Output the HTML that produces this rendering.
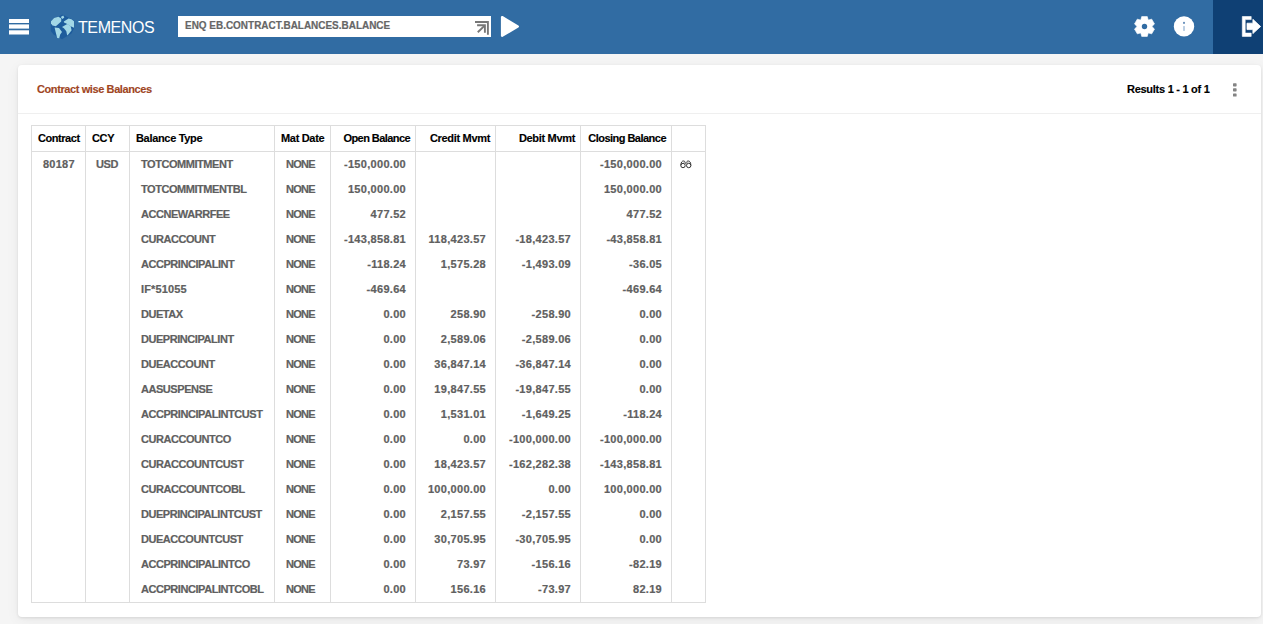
<!DOCTYPE html><html><head><meta charset="utf-8"><style>
*{margin:0;padding:0;box-sizing:border-box}
html,body{width:1263px;height:624px;overflow:hidden;background:#f5f5f5;font-family:"Liberation Sans",sans-serif}
.hdr{position:absolute;left:0;top:0;width:1263px;height:54px;background:#316ca3}
.card{position:absolute;left:18px;top:65px;width:1243px;height:552px;background:#fff;border-radius:4px;box-shadow:0 1px 3px rgba(0,0,0,.1),0 3px 14px rgba(0,0,0,.055)}
.t{position:absolute;white-space:nowrap;font-weight:bold;font-size:11px;line-height:13px}
.ttl{color:#a0461f;letter-spacing:-0.4px;-webkit-text-stroke:0.15px #a0461f}
.res{color:#000;letter-spacing:-0.27px;-webkit-text-stroke:0.15px #000}
.vl{position:absolute;width:1px;background:#ddd;top:125px;height:478px}
.hl{position:absolute;height:1px;background:#ddd;left:31px;width:675px}
.h{color:#000;letter-spacing:-0.32px;-webkit-text-stroke:0.15px #000}
.d{color:#606060;letter-spacing:-0.45px;-webkit-text-stroke:0.2px #606060}
.n{color:#606060;letter-spacing:0.3px;text-align:right;-webkit-text-stroke:0.2px #606060}
.srch{position:absolute;left:178px;top:16px;width:313px;height:21px;background:#fff}
</style></head><body>
<div class="hdr">
<svg style="position:absolute;left:0;top:0" width="1263" height="54"><rect x="1213" y="0" width="50" height="54" fill="#0f4074"/><rect x="9" y="19" width="20" height="4" fill="#fff"/><rect x="9" y="24.4" width="20" height="4.2" fill="#fff"/><rect x="9" y="30.3" width="20" height="4.2" fill="#fff"/><path d="M62.4,14.6 L74.2,20.6 L74,28.5 L71.5,33.5 L62,39.2 L53.5,34.5 L50.8,31 L50.8,20.8 Z" fill="#1d5c9c"/><path d="M51,21.2 L54.2,18 L58.5,16.8 L61.3,18.5 L61.2,21.5 L58.4,24 L55.8,26.2 L52.5,25.4 L51,23.6 Z" fill="#a2d7e6"/><path d="M60.8,16.9 L63.2,15.6 L64.3,17.4 L62.4,19 Z" fill="#a2d7e6"/><path d="M54.6,27.6 L59,27.9 L62,32 L60.2,34.6 L59.2,38.2 L57.2,38 L55.7,32.3 Z" fill="#a2d7e6"/><path d="M63.8,21.6 L68.6,18.6 L71.5,19.2 L74,21.2 L74,27.8 L70.6,26.3 L66.3,23.5 L64,22.6 Z" fill="#a2d7e6"/><path d="M62,26.9 L67.2,24 L70.6,26 L71.6,30.3 L68.7,34.1 L67.2,35.6 L66.3,31.2 L63.9,28.3 Z" fill="#a2d7e6"/><path d="M502.1,17.1 L517.8,26.5 L502.1,35.7 Z" fill="#fff" stroke="#fff" stroke-width="2.4" stroke-linejoin="round"/><g transform="translate(1144.5,26.5)" fill="#fff" stroke="#fff" stroke-width="0.6" stroke-linejoin="round"><circle r="7.1"/><path d="M-3.8,-6 L-2.8,-9.9 L2.8,-9.9 L3.8,-6 Z" transform="rotate(0)"/><path d="M-3.8,-6 L-2.8,-9.9 L2.8,-9.9 L3.8,-6 Z" transform="rotate(60)"/><path d="M-3.8,-6 L-2.8,-9.9 L2.8,-9.9 L3.8,-6 Z" transform="rotate(120)"/><path d="M-3.8,-6 L-2.8,-9.9 L2.8,-9.9 L3.8,-6 Z" transform="rotate(180)"/><path d="M-3.8,-6 L-2.8,-9.9 L2.8,-9.9 L3.8,-6 Z" transform="rotate(240)"/><path d="M-3.8,-6 L-2.8,-9.9 L2.8,-9.9 L3.8,-6 Z" transform="rotate(300)"/></g><circle cx="1144.5" cy="26.5" r="2.7" fill="#316ca3"/><circle cx="1184" cy="26.4" r="10.2" fill="#fff"/><rect x="1183" y="21.9" width="2" height="1.9" fill="#6f95be"/><rect x="1183" y="26.1" width="2" height="4.8" fill="#bccfe3"/><path d="M1242.3,16.5 H1251.2 V19.6 H1245.2 V33.1 H1251.2 V36.4 H1242.3 Z" fill="#fff" stroke="#fff" stroke-width="0.6" stroke-linejoin="round"/><path d="M1247,23.2 H1252.9 V19.3 L1260.6,26.5 L1252.9,33.6 V29.6 H1247 Z" fill="#fff" stroke="#fff" stroke-width="0.8" stroke-linejoin="round"/></svg>
<div style="position:absolute;left:78px;top:18px;font-size:16px;color:#fff;line-height:20px;letter-spacing:-0.4px">TEMENOS</div>
<div class="srch"><div class="t" style="left:7px;top:3px;color:#666;letter-spacing:0;transform:scaleX(0.905);transform-origin:0 0;-webkit-text-stroke:0.2px #666">ENQ EB.CONTRACT.BALANCES.BALANCE</div><svg style="position:absolute;left:0;top:0" width="313" height="21" viewBox="178 16 313 21"><path d="M475,22 H487.9 V34.8" fill="none" stroke="#777" stroke-width="1.9"/><path d="M477.1,25.3 H484.9 V32.7" fill="none" stroke="#777" stroke-width="1.9"/><path d="M477.8,32.3 L484.6,25.6" fill="none" stroke="#777" stroke-width="1.9"/></svg></div>
</div>
<div class="card"></div>
<div class="t ttl" style="left:37px;top:83px">Contract wise Balances</div>
<div class="t res" style="left:1127px;top:83px">Results 1 - 1 of 1</div>
<svg style="position:absolute;left:1230px;top:80px" width="10" height="20"><rect x="3" y="3.2" width="3.6" height="3.2" rx="0.7" fill="#848484"/><rect x="3" y="8.3" width="3.6" height="3.2" rx="0.7" fill="#848484"/><rect x="3" y="13.4" width="3.6" height="3.2" rx="0.7" fill="#848484"/></svg>
<div style="position:absolute;left:18px;top:113px;width:1243px;height:1px;background:#efefef"></div>
<div class="vl" style="left:31px"></div>
<div class="vl" style="left:85px"></div>
<div class="vl" style="left:129px"></div>
<div class="vl" style="left:274px"></div>
<div class="vl" style="left:330px"></div>
<div class="vl" style="left:415px"></div>
<div class="vl" style="left:495px"></div>
<div class="vl" style="left:580px"></div>
<div class="vl" style="left:671px"></div>
<div class="vl" style="left:705px"></div>
<div class="hl" style="top:125px"></div>
<div class="hl" style="top:151px"></div>
<div class="hl" style="top:602px"></div>
<svg style="position:absolute;left:676px;top:156px" width="20" height="16" viewBox="676 156 20 16"><g fill="none" stroke="#2a2a2a" stroke-width="0.95"><circle cx="683" cy="165.5" r="2.2"/><circle cx="688.7" cy="165.5" r="2.2"/><path d="M680.9,165.3 C680.9,162.3 682,161 683.4,161 C684.6,161 685.3,161.8 685.6,163.6"/><path d="M690.8,165.3 C690.8,162.3 689.7,161 688.3,161 C687.1,161 686.4,161.8 686.1,163.6"/></g><path d="M683.5,162.7 H688.2" stroke="#999" stroke-width="0.8"/></svg>
<div class="t h" style="left:38px;top:132px;letter-spacing:-0.45px">Contract</div>
<div class="t h" style="left:92px;top:132px;letter-spacing:-0.32px">CCY</div>
<div class="t h" style="left:136px;top:132px;letter-spacing:-0.32px">Balance Type</div>
<div class="t h" style="left:281px;top:132px;letter-spacing:-0.32px">Mat Date</div>
<div class="t h" style="right:853px;top:132px;letter-spacing:-0.57px">Open Balance</div>
<div class="t h" style="right:773px;top:132px;letter-spacing:-0.32px">Credit Mvmt</div>
<div class="t h" style="right:688px;top:132px;letter-spacing:-0.32px">Debit Mvmt</div>
<div class="t h" style="right:597px;top:132px;letter-spacing:-0.52px">Closing Balance</div>
<div class="t d" style="left:43px;top:158px;letter-spacing:0.25px">80187</div>
<div class="t d" style="left:85px;width:44px;text-align:center;top:158px">USD</div>
<div class="t d" style="left:141px;top:158px">TOTCOMMITMENT</div>
<div class="t d" style="left:286px;top:158px;letter-spacing:-0.75px">NONE</div>
<div class="t n" style="right:857px;top:158px">-150,000.00</div>
<div class="t n" style="right:601px;top:158px">-150,000.00</div>
<div class="t d" style="left:141px;top:183px">TOTCOMMITMENTBL</div>
<div class="t d" style="left:286px;top:183px;letter-spacing:-0.75px">NONE</div>
<div class="t n" style="right:857px;top:183px">150,000.00</div>
<div class="t n" style="right:601px;top:183px">150,000.00</div>
<div class="t d" style="left:141px;top:208px">ACCNEWARRFEE</div>
<div class="t d" style="left:286px;top:208px;letter-spacing:-0.75px">NONE</div>
<div class="t n" style="right:857px;top:208px">477.52</div>
<div class="t n" style="right:601px;top:208px">477.52</div>
<div class="t d" style="left:141px;top:233px">CURACCOUNT</div>
<div class="t d" style="left:286px;top:233px;letter-spacing:-0.75px">NONE</div>
<div class="t n" style="right:857px;top:233px">-143,858.81</div>
<div class="t n" style="right:777px;top:233px">118,423.57</div>
<div class="t n" style="right:692px;top:233px">-18,423.57</div>
<div class="t n" style="right:601px;top:233px">-43,858.81</div>
<div class="t d" style="left:141px;top:258px">ACCPRINCIPALINT</div>
<div class="t d" style="left:286px;top:258px;letter-spacing:-0.75px">NONE</div>
<div class="t n" style="right:857px;top:258px">-118.24</div>
<div class="t n" style="right:777px;top:258px">1,575.28</div>
<div class="t n" style="right:692px;top:258px">-1,493.09</div>
<div class="t n" style="right:601px;top:258px">-36.05</div>
<div class="t d" style="left:141px;top:283px;letter-spacing:0.15px">IF*51055</div>
<div class="t d" style="left:286px;top:283px;letter-spacing:-0.75px">NONE</div>
<div class="t n" style="right:857px;top:283px">-469.64</div>
<div class="t n" style="right:601px;top:283px">-469.64</div>
<div class="t d" style="left:141px;top:308px">DUETAX</div>
<div class="t d" style="left:286px;top:308px;letter-spacing:-0.75px">NONE</div>
<div class="t n" style="right:857px;top:308px">0.00</div>
<div class="t n" style="right:777px;top:308px">258.90</div>
<div class="t n" style="right:692px;top:308px">-258.90</div>
<div class="t n" style="right:601px;top:308px">0.00</div>
<div class="t d" style="left:141px;top:333px">DUEPRINCIPALINT</div>
<div class="t d" style="left:286px;top:333px;letter-spacing:-0.75px">NONE</div>
<div class="t n" style="right:857px;top:333px">0.00</div>
<div class="t n" style="right:777px;top:333px">2,589.06</div>
<div class="t n" style="right:692px;top:333px">-2,589.06</div>
<div class="t n" style="right:601px;top:333px">0.00</div>
<div class="t d" style="left:141px;top:358px">DUEACCOUNT</div>
<div class="t d" style="left:286px;top:358px;letter-spacing:-0.75px">NONE</div>
<div class="t n" style="right:857px;top:358px">0.00</div>
<div class="t n" style="right:777px;top:358px">36,847.14</div>
<div class="t n" style="right:692px;top:358px">-36,847.14</div>
<div class="t n" style="right:601px;top:358px">0.00</div>
<div class="t d" style="left:141px;top:383px">AASUSPENSE</div>
<div class="t d" style="left:286px;top:383px;letter-spacing:-0.75px">NONE</div>
<div class="t n" style="right:857px;top:383px">0.00</div>
<div class="t n" style="right:777px;top:383px">19,847.55</div>
<div class="t n" style="right:692px;top:383px">-19,847.55</div>
<div class="t n" style="right:601px;top:383px">0.00</div>
<div class="t d" style="left:141px;top:408px">ACCPRINCIPALINTCUST</div>
<div class="t d" style="left:286px;top:408px;letter-spacing:-0.75px">NONE</div>
<div class="t n" style="right:857px;top:408px">0.00</div>
<div class="t n" style="right:777px;top:408px">1,531.01</div>
<div class="t n" style="right:692px;top:408px">-1,649.25</div>
<div class="t n" style="right:601px;top:408px">-118.24</div>
<div class="t d" style="left:141px;top:433px">CURACCOUNTCO</div>
<div class="t d" style="left:286px;top:433px;letter-spacing:-0.75px">NONE</div>
<div class="t n" style="right:857px;top:433px">0.00</div>
<div class="t n" style="right:777px;top:433px">0.00</div>
<div class="t n" style="right:692px;top:433px">-100,000.00</div>
<div class="t n" style="right:601px;top:433px">-100,000.00</div>
<div class="t d" style="left:141px;top:458px">CURACCOUNTCUST</div>
<div class="t d" style="left:286px;top:458px;letter-spacing:-0.75px">NONE</div>
<div class="t n" style="right:857px;top:458px">0.00</div>
<div class="t n" style="right:777px;top:458px">18,423.57</div>
<div class="t n" style="right:692px;top:458px">-162,282.38</div>
<div class="t n" style="right:601px;top:458px">-143,858.81</div>
<div class="t d" style="left:141px;top:483px">CURACCOUNTCOBL</div>
<div class="t d" style="left:286px;top:483px;letter-spacing:-0.75px">NONE</div>
<div class="t n" style="right:857px;top:483px">0.00</div>
<div class="t n" style="right:777px;top:483px">100,000.00</div>
<div class="t n" style="right:692px;top:483px">0.00</div>
<div class="t n" style="right:601px;top:483px">100,000.00</div>
<div class="t d" style="left:141px;top:508px">DUEPRINCIPALINTCUST</div>
<div class="t d" style="left:286px;top:508px;letter-spacing:-0.75px">NONE</div>
<div class="t n" style="right:857px;top:508px">0.00</div>
<div class="t n" style="right:777px;top:508px">2,157.55</div>
<div class="t n" style="right:692px;top:508px">-2,157.55</div>
<div class="t n" style="right:601px;top:508px">0.00</div>
<div class="t d" style="left:141px;top:533px">DUEACCOUNTCUST</div>
<div class="t d" style="left:286px;top:533px;letter-spacing:-0.75px">NONE</div>
<div class="t n" style="right:857px;top:533px">0.00</div>
<div class="t n" style="right:777px;top:533px">30,705.95</div>
<div class="t n" style="right:692px;top:533px">-30,705.95</div>
<div class="t n" style="right:601px;top:533px">0.00</div>
<div class="t d" style="left:141px;top:558px">ACCPRINCIPALINTCO</div>
<div class="t d" style="left:286px;top:558px;letter-spacing:-0.75px">NONE</div>
<div class="t n" style="right:857px;top:558px">0.00</div>
<div class="t n" style="right:777px;top:558px">73.97</div>
<div class="t n" style="right:692px;top:558px">-156.16</div>
<div class="t n" style="right:601px;top:558px">-82.19</div>
<div class="t d" style="left:141px;top:583px">ACCPRINCIPALINTCOBL</div>
<div class="t d" style="left:286px;top:583px;letter-spacing:-0.75px">NONE</div>
<div class="t n" style="right:857px;top:583px">0.00</div>
<div class="t n" style="right:777px;top:583px">156.16</div>
<div class="t n" style="right:692px;top:583px">-73.97</div>
<div class="t n" style="right:601px;top:583px">82.19</div>
</body></html>
